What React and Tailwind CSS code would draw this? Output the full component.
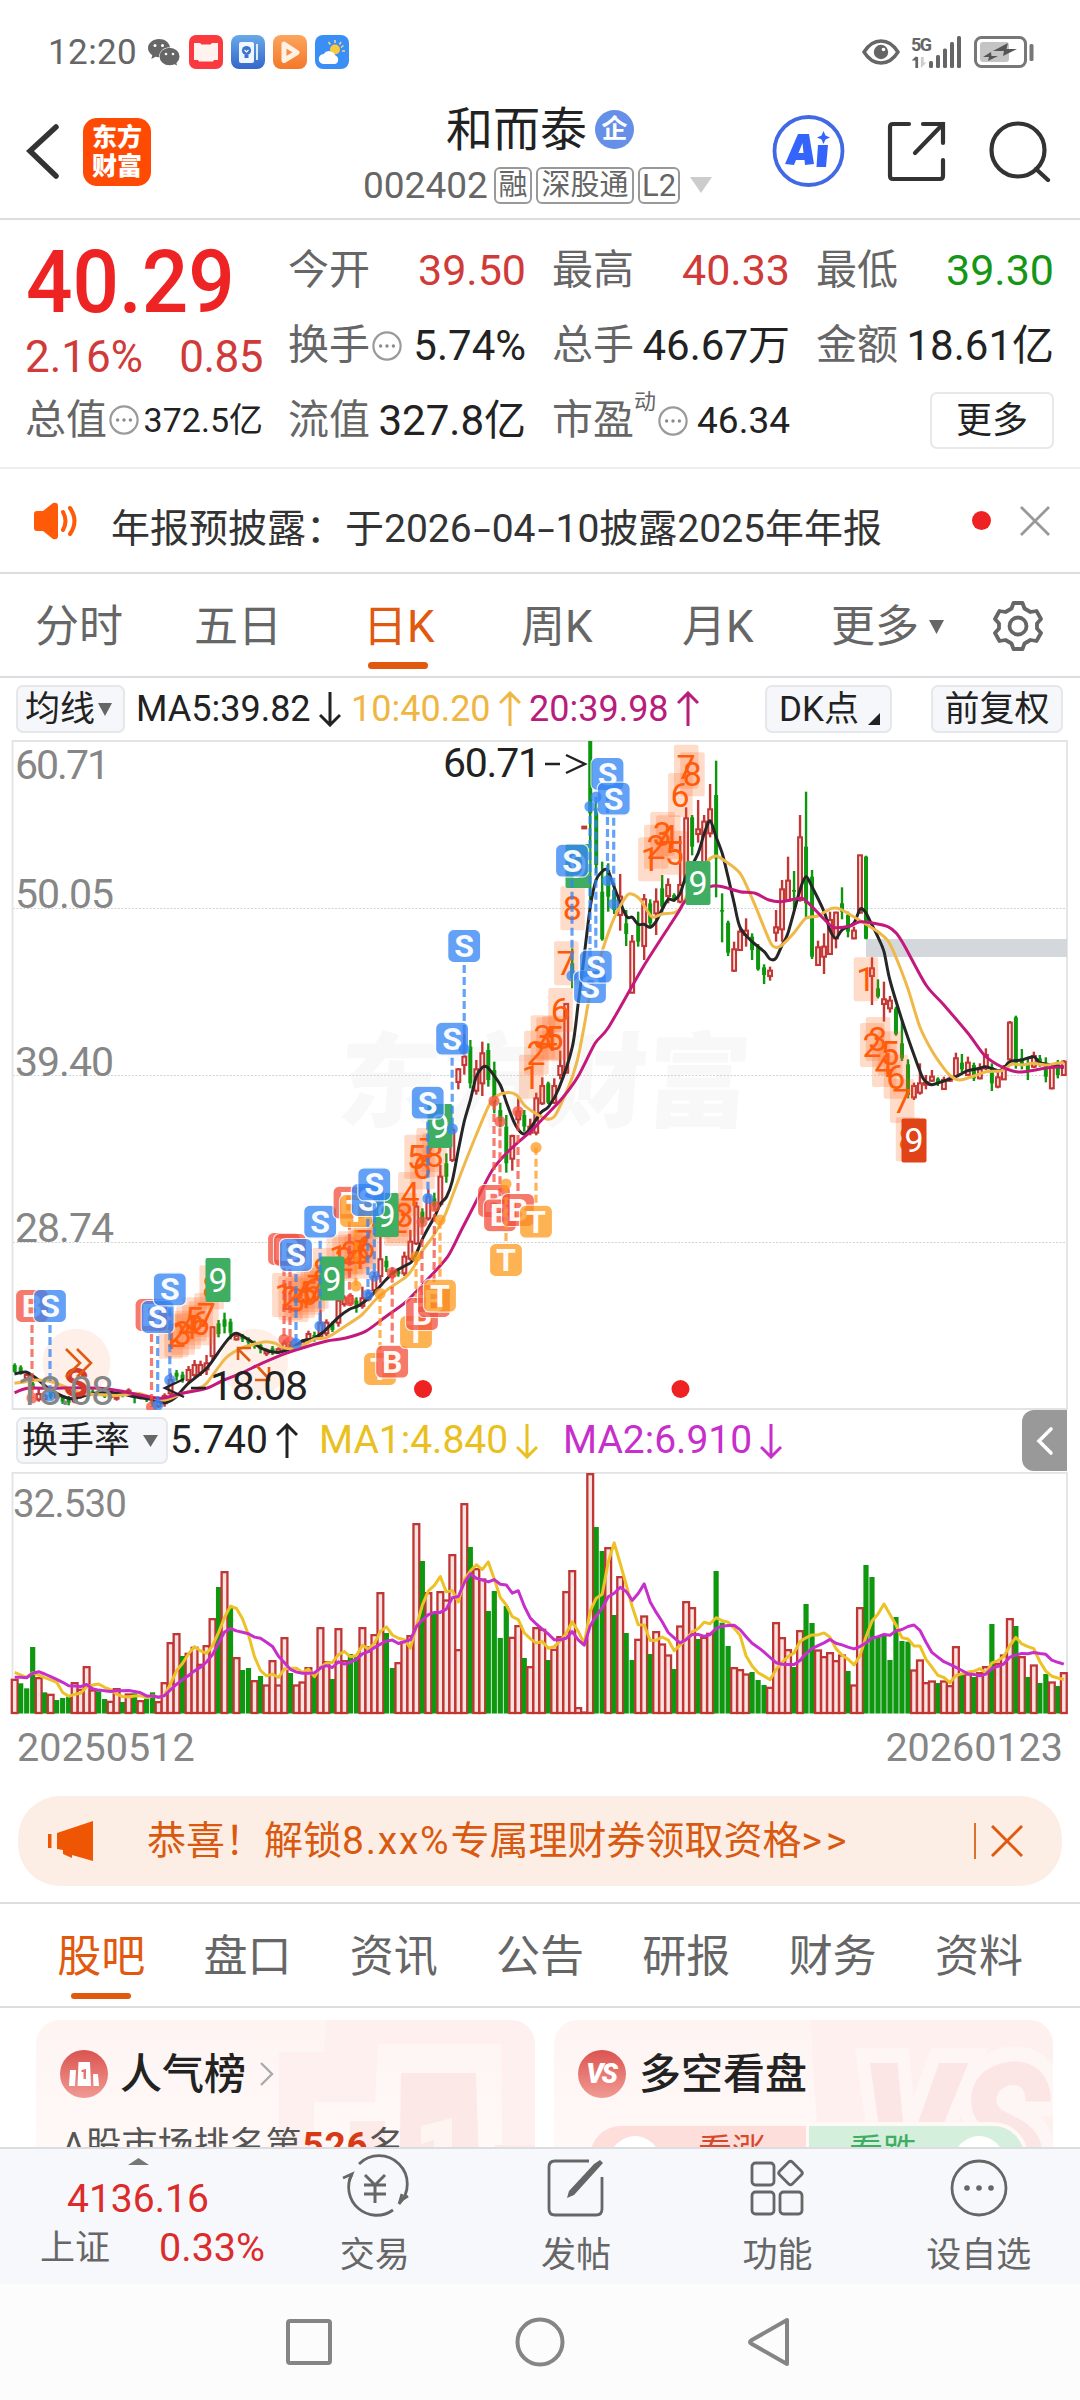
import React from "react";

const FONT = "font-['Roboto','Noto_Sans_CJK_SC',sans-serif]";

/* ---------- chart data ---------- */

const STEP = 5.995;
const X0 = 14.7;
const cx = (i) => X0 + STEP * i;

// Each volume entry: bar top (in thirds of a pixel below y=1400); trailing sign marks direction, negative = falling day.
const VOL = [
  838, -850, -865, -741, 833, -877, 883, -900, -894, -890, 848, 868, 800, 870, -874, -897, 904, 866, -906, 882, -880, 902,
  -896, -877, 905, 848, 728, 701, -768, 760, 742, 793, 737, 656, -561, 515, -622, 773, -810, -804, 842, -828, 855, 782,
  855, 713, -819, 855, 846, 803, -828, 683, 785, -837, 686, 782, -762, -766, 683, 740, 704, 578, -699, -804, 788, 725,
  707, 371, -483, 578, -642, 575, 600, 464, 749, 311, -441, 506, 537, -633, -573, -714, -618, 712, 677, -774, 800, 683,
  688, -780, 748, 710, 575, 512, 923, 936, 221, -381, -453, 443, -645, 530, -699, -780, 718, 648, -762, 695, 732, 765,
  -807, 678, 605, 623, -717, 712, 700, -513, -668, -738, 803, 809, 822, -816, -840, -855, 862, 668, 713, 749, -801, 692,
  -612, -669, 750, 770, 758, 782, 765, -813, 855, 623, -495, -531, -708, -705, -780, -651, -723, -725, 810, 780, 848,
  843, -849, 843, 857, 740, -820, 822, -831, 818, 800, -672, 790, 765, 656, -678, 770, -831, 795, -849, -822, 846, -858,
  818,
];

const MA5_HEAD = [817, 825, 832, 818];
const MA10_HEAD = [832, 832, 833, 820, 815, 822, 830, 838, 847];

function average(n, head) {
  return VOL.map((_, i) => {
    if (i < head.length) return head[i];
    let s = 0;
    for (let k = i - n + 1; k <= i; k++) s += Math.abs(VOL[k]);
    return s / n;
  });
}
const volLine = (arr) => arr.map((v, i) => `${cx(i).toFixed(1)},${(1400 + v / 3).toFixed(1)}`).join(" ");

const LX = (x) => x / 2.904;
const LY = (y) => 1060 + y / 3;
const RX = (x) => 540 + x / 2.904;
const RY = (y) => 730 + y / 3;
const L = (pts) => pts.map(([x, y]) => [LX(x), LY(y)]);
const R = (pts) => pts.map(([x, y]) => [RX(x), RY(y)]);

// index, direction, high, body top, body bottom, low
const CANDLES_LEFT = [
  [0, "g", 910, 915, 935, 938], [1, "g", 916, 922, 940, 944], [2, "r", 940, 945, 955, 960], [3, "g", 965, 970, 985, 990],
  [4, "r", 985, 1002, 1018, 1025], [5, "r", 1000, 1008, 1018, 1022], [6, "g", 990, 1000, 1012, 1018], [7, "r", 998, 1002, 1012, 1018],
  [8, "g", 1005, 1010, 1025, 1032], [9, "g", 1008, 1014, 1028, 1036], [10, "r", 1005, 1012, 1024, 1030], [11, "r", 995, 1000, 1010, 1016],
  [12, "r", 985, 990, 1002, 1006], [13, "g", 988, 994, 1000, 1004], [14, "g", 990, 998, 1005, 1008], [15, "g", 1000, 1004, 1010, 1014],
  [16, "r", 1000, 1006, 1010, 1016], [17, "r", 1004, 1010, 1016, 1022], [18, "g", 1000, 1004, 1008, 1012], [19, "r", 985, 992, 1000, 1006],
  [20, "g", 996, 1000, 1010, 1030], [21, "r", 1005, 1010, 1014, 1018], [22, "g", 1008, 1012, 1018, 1026], [23, "g", 1012, 1018, 1032, 1040],
  [24, "r", 1018, 1024, 1038, 1044], [25, "r", 1000, 1008, 1030, 1040], [26, "r", 940, 960, 1000, 1012], [27, "g", 930, 938, 950, 962],
  [28, "g", 935, 944, 958, 968], [29, "r", 918, 930, 960, 972], [30, "r", 900, 915, 945, 955], [31, "r", 902, 915, 938, 948],
  [32, "r", 885, 910, 928, 945], [33, "r", 798, 802, 888, 900], [34, "g", 780, 790, 822, 832], [35, "g", 758, 778, 800, 820],
  [36, "g", 776, 785, 818, 838], [37, "r", 822, 828, 838, 842], [38, "g", 822, 828, 838, 846], [39, "g", 832, 838, 848, 855],
  [40, "g", 842, 848, 858, 866], [41, "g", 850, 855, 868, 880], [42, "r", 866, 872, 880, 888], [43, "g", 858, 865, 875, 885],
  [44, "r", 862, 868, 876, 882], [45, "r", 840, 850, 866, 875], [46, "g", 845, 852, 862, 870], [47, "r", 848, 855, 862, 868],
  [48, "r", 838, 845, 855, 862], [49, "r", 812, 822, 838, 842], [50, "g", 815, 825, 838, 845], [51, "r", 748, 790, 830, 840],
  [52, "r", 778, 788, 820, 828], [53, "g", 785, 792, 810, 816], [54, "r", 712, 722, 788, 800], [55, "r", 706, 715, 732, 740],
  [56, "r", 700, 708, 730, 738], [57, "g", 712, 722, 742, 758], [58, "r", 680, 715, 738, 746], [59, "r", 690, 700, 718, 724],
  [60, "r", 636, 650, 690, 702], [61, "r", 530, 598, 648, 668], [62, "g", 588, 602, 622, 636], [63, "r", 622, 634, 648, 656],
  [64, "g", 625, 634, 642, 650], [65, "r", 575, 590, 640, 648], [66, "r", 510, 545, 596, 602], [67, "r", 425, 440, 550, 555],
  [68, "g", 445, 455, 490, 500], [69, "r", 388, 410, 475, 482], [70, "g", 398, 415, 440, 452], [71, "r", 315, 350, 432, 440],
  [72, "g", 280, 310, 350, 368], [73, "r", 200, 210, 300, 306], [74, "r", 24, 28, 66, 88], [75, "r", -80, -10, 15, 44],
  [76, "g", -60, -40, 70, 85], [77, "r", 0, 28, 92, 104], [78, "r", -55, -20, 70, 108], [79, "g", -50, -30, 60, 80],
  [80, "g", 5, 30, 130, 160], [81, "g", 128, 150, 185, 202], [82, "g", 165, 200, 310, 338], [83, "r", 224, 228, 296, 332],
  [84, "r", 115, 155, 178, 190], [85, "g", 150, 165, 200, 215], [86, "r", 176, 200, 218, 226], [87, "r", 98, 115, 218, 226],
];

const CANDLES_RIGHT = [
  [88, "r", 1042, 1068, 1120, 1125], [89, "g", 1055, 1060, 1118, 1122], [90, "r", 1045, 1068, 1118, 1122],
  [91, "r", 962, 1008, 1035, 1048], [92, "r", 820, 822, 1028, 1028], [93, "g", 655, 700, 745, 775],
  [95, "r", 289, 290, 295, 296], [96, "g", 33, 33, 250, 510], [97, "g", 215, 235, 405, 430], [98, "g", 395, 485, 628, 632],
  [99, "g", 400, 420, 500, 545], [100, "g", 460, 480, 540, 552], [101, "r", 432, 500, 555, 602], [102, "g", 540, 580, 612, 648],
  [103, "r", 615, 635, 788, 790], [104, "g", 545, 580, 635, 650], [105, "r", 492, 508, 648, 690], [106, "g", 508, 520, 580, 595],
  [107, "r", 475, 515, 550, 615], [108, "g", 435, 475, 530, 548], [109, "r", 445, 465, 498, 520], [110, "g", 490, 495, 510, 516],
  [111, "r", 318, 465, 515, 520], [112, "r", 232, 265, 450, 460], [113, "g", 255, 262, 350, 376], [114, "r", 210, 298, 312, 338],
  [115, "r", 255, 275, 400, 402], [116, "r", 162, 238, 310, 322], [117, "g", 92, 195, 385, 502], [118, "g", 490, 540, 545, 637],
  [119, "g", 572, 578, 668, 678], [120, "r", 635, 658, 722, 726], [121, "r", 590, 605, 660, 662], [122, "r", 565, 602, 615, 650],
  [123, "g", 610, 620, 660, 690], [124, "g", 642, 650, 718, 722], [125, "g", 703, 712, 735, 762], [126, "r", 710, 722, 738, 752],
  [127, "r", 540, 592, 608, 635], [128, "r", 450, 478, 598, 635], [129, "r", 380, 452, 512, 515], [130, "g", 423, 480, 485, 540],
  [131, "r", 255, 322, 510, 515], [132, "g", 185, 350, 520, 565], [133, "g", 420, 440, 680, 687], [134, "r", 632, 652, 705, 708],
  [135, "r", 610, 650, 680, 732], [136, "r", 545, 570, 672, 675], [137, "r", 545, 548, 625, 655], [138, "g", 472, 520, 545, 568],
  [139, "g", 545, 555, 605, 622], [140, "r", 590, 602, 625, 628], [141, "r", 375, 376, 548, 550], [142, "g", 377, 380, 626, 628],
  [143, "r", 682, 715, 738, 825], [144, "g", 748, 775, 800, 805], [145, "r", 755, 808, 822, 875], [146, "r", 798, 812, 835, 848],
  [147, "g", 830, 836, 912, 917], [148, "g", 870, 940, 985, 993], [149, "g", 988, 1003, 1095, 1105], [150, "r", 1058, 1068, 1102, 1110],
  [151, "r", 1000, 1060, 1088, 1094], [152, "r", 1035, 1058, 1064, 1078], [153, "r", 1020, 1040, 1052, 1056],
  [154, "g", 1042, 1046, 1058, 1068], [155, "r", 1040, 1050, 1077, 1080], [156, "r", 1035, 1046, 1052, 1056],
  [157, "r", 968, 985, 1038, 1042], [158, "g", 972, 998, 1018, 1026], [159, "r", 980, 998, 1035, 1038], [160, "g", 998, 1005, 1045, 1053],
  [161, "r", 1000, 1018, 1045, 1048], [162, "r", 955, 975, 1015, 1020], [163, "g", 1000, 1012, 1060, 1083],
  [164, "r", 1025, 1042, 1070, 1075], [165, "r", 1005, 1018, 1048, 1050], [166, "r", 873, 878, 988, 990], [167, "g", 857, 862, 1005, 1016],
  [168, "g", 957, 985, 1005, 1018], [169, "g", 985, 1000, 1022, 1050], [170, "r", 965, 978, 1010, 1014], [171, "g", 975, 985, 1005, 1010],
  [172, "g", 982, 1000, 1040, 1057], [173, "r", 1005, 1012, 1075, 1078], [174, "g", 990, 1000, 1035, 1045], [175, "r", 990, 995, 1035, 1038],
];

const MA5 = [
  ...L([[42, 942], [75, 936], [105, 955], [140, 985], [180, 1008], [210, 1016], [250, 1006], [300, 996], [345, 1000], [400, 1012], [440, 1018], [478, 1028], [510, 1012], [545, 972], [600, 925], [640, 868], [665, 835], [686, 820], [720, 838], [760, 865], [800, 877], [830, 872], [860, 855], [880, 842], [912, 835], [945, 810], [985, 770], [1015, 748], [1045, 735], [1085, 700], [1120, 660], [1150, 632], [1175, 618], [1200, 600], [1230, 530], [1262, 470], [1280, 430], [1297, 410], [1313, 365], [1331, 270], [1348, 185], [1366, 120], [1383, 50], [1401, 22], [1413, 20], [1430, 40], [1453, 75], [1470, 125], [1488, 175], [1505, 208], [1522, 222], [1540, 205]]),
  ...R([[2, 1148], [25, 1130], [55, 1075], [94, 950], [111, 820], [128, 680], [146, 530], [163, 450], [180, 425], [196, 420], [215, 470], [250, 557], [268, 562], [285, 583], [302, 583], [320, 592], [337, 575], [355, 538], [372, 508], [390, 510], [407, 490], [424, 440], [459, 370], [477, 310], [494, 272], [511, 320], [529, 370], [546, 440], [564, 520], [581, 592], [616, 635], [651, 665], [668, 687], [685, 685], [703, 645], [720, 610], [755, 480], [772, 440], [790, 470], [825, 545], [842, 600], [859, 625], [877, 600], [911, 580], [930, 537], [946, 548], [964, 585], [981, 620], [999, 665], [1016, 750], [1051, 870], [1086, 975], [1110, 1040], [1121, 1055], [1138, 1064], [1173, 1053], [1208, 1040], [1242, 1022], [1277, 1015], [1295, 1010], [1330, 1022], [1347, 1015], [1364, 995], [1399, 990], [1434, 980], [1451, 998], [1486, 1005], [1521, 1012]]),
];
const MA10 = [
  ...L([[42, 970], [75, 965], [110, 960], [150, 965], [200, 985], [240, 1000], [300, 1005], [350, 1006], [400, 1000], [440, 1012], [480, 1020], [530, 1000], [575, 985], [600, 970], [655, 895], [700, 865], [730, 855], [770, 845], [800, 850], [830, 865], [870, 860], [912, 838], [950, 832], [1000, 800], [1050, 765], [1090, 720], [1130, 685], [1180, 650], [1205, 615], [1225, 575], [1260, 525], [1290, 470], [1313, 410], [1348, 315], [1383, 225], [1418, 140], [1440, 110], [1470, 98], [1500, 105], [1522, 135], [1540, 150]]),
  ...R([[0, 1158], [25, 1168], [45, 1155], [75, 1090], [94, 1040], [111, 980], [128, 890], [146, 790], [180, 665], [215, 565], [250, 500], [266, 492], [290, 508], [325, 560], [355, 552], [390, 548], [410, 530], [455, 440], [490, 390], [511, 378], [530, 388], [581, 430], [620, 515], [668, 635], [685, 652], [703, 645], [738, 608], [772, 565], [807, 558], [842, 537], [859, 534], [877, 540], [911, 560], [946, 582], [981, 605], [1010, 632], [1033, 680], [1068, 775], [1103, 890], [1138, 962], [1173, 1015], [1195, 1040], [1220, 1050], [1260, 1038], [1295, 1025], [1340, 1022], [1370, 1003], [1400, 1005], [1430, 1000], [1470, 1005], [1500, 1000], [1521, 998]]),
];
const MA20 = [
  ...L([[42, 998], [80, 985], [150, 985], [230, 983], [290, 985], [350, 993], [420, 1008], [470, 1015], [520, 1002], [600, 985], [650, 960], [700, 940], [760, 910], [830, 880], [890, 860], [950, 843], [1000, 835], [1060, 815], [1120, 770], [1180, 725], [1240, 660], [1300, 590], [1340, 510], [1380, 430], [1430, 330], [1480, 270], [1540, 215]]),
  ...R([[0, 1175], [60, 1110], [110, 1040], [160, 940], [200, 890], [300, 710], [400, 550], [425, 510], [494, 470], [529, 470], [580, 485], [625, 490], [665, 510], [700, 515], [755, 505], [775, 515], [842, 585], [860, 593], [900, 588], [930, 575], [970, 580], [1010, 590], [1035, 610], [1060, 650], [1121, 765], [1173, 825], [1243, 910], [1290, 975], [1330, 1005], [1370, 1022], [1400, 1026], [1450, 1018], [1486, 1012], [1521, 1010]]),
];

// Smooth open curve through the given points.
function curve(p) {
  let d = `M${p[0][0].toFixed(1)} ${p[0][1].toFixed(1)}`;
  for (let i = 0; i < p.length - 1; i++) {
    const a = p[i - 1] || p[i];
    const b = p[i];
    const c = p[i + 1];
    const e = p[i + 2] || c;
    const k = 7;
    d += `C${(b[0] + (c[0] - a[0]) / k).toFixed(1)} ${(b[1] + (c[1] - a[1]) / k).toFixed(1)} ${(c[0] - (e[0] - b[0]) / k).toFixed(1)} ${(c[1] - (e[1] - b[1]) / k).toFixed(1)} ${c[0].toFixed(1)} ${c[1].toFixed(1)}`;
  }
  return d;
}

// Trade signals: letter, badge centre, price dot
const SIGNALS = [
  ["B", 32, 1306, 32, 1398], ["S", 50, 1306, 50, 1396],
  ["B", 151.5, 1315, 151.5, 1407], ["S", 157.7, 1317, 157.7, 1405], ["S", 169.8, 1289.3, 169.8, 1380],
  ["B", 284, 1249, 284, 1339.5], ["B", 290, 1250, 290, 1342], ["S", 296, 1255, 296, 1343.5], ["S", 320.2, 1221.7, 320, 1326],
  ["B", 349.5, 1202.7, 349.5, 1300.7], ["T", 356, 1211, 356, 1286], ["S", 367.8, 1200, 368, 1294.5], ["S", 374.3, 1184.3, 374.3, 1276],
  ["T", 380, 1369, 380, 1293.5], ["B", 392.2, 1361.7, 392.2, 1272.7],
  ["T", 416, 1332, 416, 1256.5], ["B", 422, 1314, 422, 1222], ["B", 434, 1301, 434.5, 1206.5], ["T", 440, 1295.7, 440, 1220],
  ["B", 494, 1201, 494, 1101], ["B", 500, 1215.3, 500, 1121.5], ["B", 518, 1210, 518, 1111.5],
  ["T", 506, 1260, 506, 1184], ["T", 536, 1221.7, 536, 1147.5],
  ["S", 427.7, 1102.7, 428, 1198.5], ["S", 452.1, 1038.7, 452.3, 1129], ["S", 464.2, 946, 464.2, 1049],
  ["S", 607.5, 774, 607.5, 880.7], ["S", 613.7, 798.7, 613.7, 904],
  ["S", 572, 860.7, 572, 975.7], ["S", 590, 987, 590, 806.5], ["S", 595.8, 966.7, 596, 797],
];
const SIGNAL_COLOR = { B: "#f4513f", S: "#3384f5", T: "#fd9a1e" };

const COUNTS = [
  ...L([[495, 830], [512, 826], [530, 818], [547, 802], [564, 778], [582, 790], [599, 765], [614, 682]]).map((p, i) => [...p, i + 1]),
  ...L([[825, 705], [843, 714], [860, 720], [878, 708], [895, 698], [908, 690], [918, 680], [935, 630]]).map((p, i) => [...p, i + 1]),
  ...L([[983, 590], [1000, 597], [1017, 580], [1035, 590], [1046, 575], [1062, 562], [1055, 545], [1100, 470]]).map((p, i) => [...p, i + 1]),
  ...L([[1150, 492], [1157, 482], [1174, 464], [1191, 402], [1209, 290], [1226, 322], [1244, 270], [1261, 285]]).map((p, i) => [...p, i + 1]),
  ...L([[1542, 50], [1557, -22], [1576, -68], [1592, -62], [1609, -66], [1627, -150], [1644, -290], [1662, -455]]).map((p, i) => [...p, i + 1]),
  ...R([[320, 388], [337, 350], [355, 312], [372, 322], [390, 368], [407, 195], [424, 110], [442, 133]]).map((p, i) => [...p, i + 1]),
  ...R([[946, 748], [964, 945], [981, 927], [999, 1005], [1016, 970], [1033, 1040], [1051, 1113], [1068, 1228]]).map((p, i) => [...p, i + 1]),
];
const NINES = [[218, 1280], [332, 1278.5], [386, 1215], [440, 1126], [578, 866], [698, 883]];

function Candle({ c, toY }) {
  const [i, dir, h, t, b, l] = c;
  const x = cx(i);
  const col = dir === "r" ? "#c23634" : "#0c970f";
  return (
    <g>
      <line x1={x} x2={x} y1={toY(h)} y2={toY(l)} stroke={col} strokeWidth="2.4" />
      {dir === "r" ? (
        <rect x={x - 1.9} y={toY(t)} width="3.8" height={Math.max(1, (b - t) / 3)} fill="#fbe3e2" stroke={col} strokeWidth="2.1" />
      ) : (
        <rect x={x - 2} y={toY(t)} width="4" height={Math.max(1, (b - t) / 3)} fill={col} />
      )}
    </g>
  );
}

function PriceChart() {
  return (
    <svg className="block h-[670px] w-[1080px] shrink-0" viewBox="0 740 1080 670" fontFamily="Roboto, 'Noto Sans CJK SC', sans-serif">
      <text x="335" y="1119" fontSize="103" fontWeight="900" fill="#f8f8f8" transform="skewX(-4) translate(79 0)" fontFamily="'Noto Sans CJK SC', sans-serif">东方财富</text>
      <g stroke="#c9c9c9" strokeWidth="1" strokeDasharray="2 1.5">
        <path d="M13 908.5H1067M13 1075.5H1067M13 1242.5H1067" opacity=".8" />
      </g>
      <path d="M12.5 741H1067V1409H12.5Z" fill="none" stroke="#e2e3e5" strokeWidth="1.8" />
      <rect x="866" y="939" width="201" height="18" fill="#d4d7dc" />
      <circle cx="76.5" cy="1362.7" r="34" fill="#fef0e8" />
      <circle cx="254" cy="1362.7" r="34" fill="#fef0e8" />
      {CANDLES_LEFT.map((c) => <Candle key={c[0]} c={c} toY={LY} />)}
      {CANDLES_RIGHT.map((c) => <Candle key={c[0]} c={c} toY={RY} />)}
      {COUNTS.map(([x, y, n], k) => (
        <g key={k}>
          <rect x={x - 12} y={y - 22} width="24.5" height="44" rx="2" fill="#ff6a20" opacity=".24" />
          <text x={x} y={y + 12} fontSize="34" textAnchor="middle" fill="#ff5a08">{n}</text>
        </g>
      ))}
      <g fill="none" strokeWidth="3" strokeLinejoin="round">
        <path d={curve(MA5)} stroke="#262626" />
        <path d={curve(MA10)} stroke="#f0b849" />
        <path d={curve(MA20)} stroke="#c3197d" />
      </g>
      {NINES.map(([x, y], k) => (
        <g key={k}>
          <rect x={x - 12.5} y={y - 22} width="25" height="44" rx="2" fill="#3fae62" />
          <text x={x} y={y + 12} fontSize="34" textAnchor="middle" fill="#fff">9</text>
        </g>
      ))}
      <rect x="901.5" y="1118.5" width="25" height="44" rx="2" fill="#e04318" />
      <text x="914" y="1152" fontSize="34" textAnchor="middle" fill="#fff">9</text>
      {SIGNALS.map(([s, x, y, dx, dy], k) => (
        <g key={k}>
          <line x1={x} x2={dx} y1={y + (dy > y ? 19 : -19)} y2={dy} stroke={SIGNAL_COLOR[s]} strokeWidth="3.2" strokeDasharray="8 4" opacity=".75" />
          <circle cx={dx} cy={dy} r="5.6" fill={SIGNAL_COLOR[s]} opacity=".75" />
          <rect x={x - 16.5} y={y - 16.5} width="33" height="33" rx="6" fill={SIGNAL_COLOR[s]} stroke="#fff" strokeWidth="1.2" opacity=".76" />
          <text x={x} y={y + 11} fontSize="32" fontWeight="700" textAnchor="middle" fill="#fff" opacity=".95">{s}</text>
        </g>
      ))}
      <text x="76" y="1397" fontSize="41" fontWeight="700" textAnchor="middle" fill="#d43a2c">S</text>
      <g fill="none" stroke="#e05a10" strokeWidth="2.6">
        <path d="M66 1349L80 1363L66 1377M77 1349L91 1363L77 1377" />
        <path d="M250 1361L238 1349M238 1360V1348H251M257 1366L269 1379M269 1367V1380H255" />
      </g>
      <g fontSize="41" fill="#868686">
        <text x="15" y="779" textLength="95">60.71</text>
        <text x="15" y="908" textLength="99">50.05</text>
        <text x="15" y="1076" textLength="99">39.40</text>
        <text x="15" y="1242" textLength="99">28.74</text>
        <text x="17" y="1405" textLength="97">18.08</text>
      </g>
      <g fontSize="41" fill="#222">
        <text x="443" y="777" textLength="98">60.71</text>
        <text x="210" y="1400" textLength="98">18.08</text>
        <path d="M545 764H560M566 755L585 764L566 773M191 1388H206M184 1379L165 1388L184 1397" fill="none" stroke="#222" strokeWidth="2.4" />
      </g>
      <circle cx="423" cy="1389" r="9" fill="#ee2222" />
      <circle cx="680.5" cy="1389" r="9" fill="#ee2222" />
    </svg>
  );
}

function VolumeChart() {
  return (
    <svg className="block h-[244px] w-[1080px] shrink-0" viewBox="0 1471 1080 244" fontFamily="Roboto, sans-serif">
      <path d="M12.5 1714V1472.8H1067V1714" fill="none" stroke="#e2e3e5" strokeWidth="1.8" />
      <text x="13" y="1517" fontSize="38.5" fill="#868686" textLength="114">32.530</text>
      {VOL.map((v, i) => {
        const y = 1400 + Math.abs(v) / 3;
        return v < 0 ? (
          <rect key={i} x={cx(i) - 2.6} y={y} width="5.2" height={1713.5 - y} fill="#0e970f" />
        ) : (
          <rect key={i} x={cx(i) - 2.9} y={y + 0.5} width="5.8" height={Math.max(0.5, 1712.5 - y)} fill="#fbe3e2" stroke="#bf3634" strokeWidth="2.3" />
        );
      })}
      <g fill="none" strokeWidth="3" strokeLinejoin="round">
        <polyline points={volLine(average(5, MA5_HEAD))} stroke="#edc226" />
        <polyline points={volLine(average(10, MA10_HEAD))} stroke="#c72fcb" />
      </g>
    </svg>
  );
}

/* ---------- small pieces ---------- */

function Dots() {
  return (
    <svg className="ml-[2px] h-[30px] w-[30px] shrink-0" viewBox="0 0 30 30" fill="none">
      <circle cx="15" cy="15" r="13.6" stroke="#9a9a9a" strokeWidth="2.2" />
      <g fill="#8a8a8a"><circle cx="8.600" cy="15" r="1.700" /><circle cx="15" cy="15" r="1.700" /><circle cx="21.400" cy="15" r="1.700" /></g>
    </svg>
  );
}

function Arrow({ up, color }) {
  return (
    <svg className="ml-[8px] h-[36px] w-[22px]" viewBox="0 0 22 36" fill="none" stroke={color} strokeWidth="3">
      {up ? <path d="M11 35V2M1 12L11 2L21 12" /> : <path d="M11 1V34M1 24L11 34L21 24" />}
    </svg>
  );
}

function Cell({ label, value, tone = "text-[#222]", children }) {
  return (
    <div className="flex w-[238px] items-center justify-between whitespace-nowrap text-[41px]">
      <span className="flex items-center text-[#666]">{label}{children}</span>
      <span className={tone}>{value}</span>
    </div>
  );
}

function StatusBar() {
  return (
    <div className="flex h-[104px] shrink-0 items-center pl-[48px] pr-[45px] text-[34px] leading-none text-[#666]">
      <span className="w-[100px] text-[35px] tracking-[0.4px]">12:20</span>
      <svg className="h-[30px] w-[32px]" viewBox="0 0 32 30" fill="#666">
        <path d="M11 2C5 2 0 6 0 11c0 3 1.600 5.500 4.300 7.200L3.300 22l4.300-2.200c1 .3 2.200.4 3.400.4C11 14 16 10 22 10.200 21.300 5.500 16.700 2 11 2Z" />
        <ellipse cx="21.500" cy="19.500" rx="10" ry="8.700" /><path d="M24 26l5 2.600-1-4z" />
        <g fill="#fff"><circle cx="7" cy="8.500" r="1.500" /><circle cx="14.500" cy="8.500" r="1.500" /><circle cx="18" cy="17" r="1.300" /><circle cx="25" cy="17" r="1.300" /></g>
      </svg>
      <div className="ml-[9px] flex gap-[8px]">
        <svg className="h-[34px] w-[34px]" viewBox="0 0 34 34"><rect width="34" height="34" rx="7" fill="#fa3a3e" /><path d="M5 8h6l1.500 1.500h9L23 8h6v17h-4l-1 1.500H10L9 25H5Z" fill="#fff3f0" /></svg>
        <svg className="h-[34px] w-[34px]" viewBox="0 0 34 34"><defs><linearGradient id="bl" x2="0" y2="1"><stop stopColor="#69a9e9" /><stop offset="1" stopColor="#3467c9" /></linearGradient></defs><rect width="34" height="34" rx="8" fill="url(#bl)" /><rect x="8" y="7" width="15" height="21" rx="2" fill="#eef6ff" /><path d="M26 9v16" stroke="#dcecff" strokeWidth="2" /><circle cx="15.500" cy="15.500" r="4.600" fill="#3b74cc" /><path d="M13.500 20h4v3h-4z" fill="#3b74cc" /><path d="M13.500 15l2 2 2-2" stroke="#fff" fill="none" strokeWidth="1.200" /></svg>
        <svg className="h-[34px] w-[34px]" viewBox="0 0 34 34"><defs><linearGradient id="og" x2="0" y2="1"><stop stopColor="#fca55c" /><stop offset="1" stopColor="#f4782a" /></linearGradient></defs><rect width="34" height="34" rx="8" fill="url(#og)" /><path d="M11 9L24 17.500L11 25.500Z" fill="none" stroke="#fff1e4" strokeWidth="5" strokeLinejoin="round" /></svg>
        <svg className="h-[34px] w-[34px]" viewBox="0 0 34 34"><rect width="34" height="34" rx="8" fill="#398ff5" /><g stroke="#f5d778" strokeWidth="1.600"><path d="M20 5v3M26 7l-1.500 2.500M30 16h-3M13.500 7l1.800 2.500M28.500 10.500l-2.500 2" /></g><circle cx="20" cy="14.500" r="5" fill="#fbc940" /><path d="M9 29a5 5 0 0 1-.4-10 6.500 6.500 0 0 1 11.500 1.300A4.600 4.600 0 0 1 20 29Z" fill="#fff" /></svg>
      </div>
      <div className="grow" />
      <svg className="h-[28px] w-[38px]" viewBox="0 0 38 28" fill="none"><path d="M2 14C7 6 12.500 3 19 3s12 3 17 11c-5 8-10.500 11-17 11S7 22 2 14Z" stroke="#666" strokeWidth="3.400" /><circle cx="19" cy="14" r="7.200" fill="#666" /><circle cx="21.500" cy="11.500" r="1.800" fill="#fff" /></svg>
      <div className="ml-[11px] flex w-[18px] flex-col text-[18px] font-bold leading-[18px]">
        <span className="leading-[17px] tracking-[-1.500px]">5G</span>
        <svg className="mt-[3px] h-[12px] w-[17px]" viewBox="0 0 17 13"><path d="M4 1h3v12H4zM0 5L5 0v5z" fill="#666" /><path d="M10 1v12l6-6h-3V1z" fill="#ccc" /></svg>
      </div>
      <svg className="h-[32px] w-[34px]" viewBox="0 0 34 32" fill="#666"><rect x="0" y="25" width="4" height="7" rx="1.500" /><rect x="7" y="19" width="4" height="13" rx="1.500" /><rect x="14" y="12.500" width="4" height="19.500" rx="1.500" /><rect x="21" y="6" width="4" height="26" rx="1.500" /><rect x="28" y="0" width="4" height="32" rx="1.500" /></svg>
      <svg className="ml-[11px] h-[33px] w-[61px]" viewBox="0 0 61 33"><rect x="1.500" y="1.500" width="50" height="29" rx="6" fill="none" stroke="#777" strokeWidth="3" /><rect x="6" y="6" width="29" height="20" rx="3" fill="#c4c4c4" /><path d="M34 7L19 15h11l-1 5 14-7H32.500ZM17 16l-8 5h6l-1 4 10-5h-6.500Z" fill="#555" /><rect x="55.500" y="8" width="4" height="17" rx="1.500" fill="#777" /></svg>
    </div>
  );
}

function Header() {
  return (
    <div className="flex h-[116px] shrink-0 items-start border-b-2 border-[#dcdde0] pl-[26px]">
      <svg className="mt-[19px] h-[56px] w-[34px]" viewBox="0 0 34 56" fill="none" stroke="#333" strokeWidth="5.500" strokeLinecap="round" strokeLinejoin="miter"><path d="M30 4L4 28L30 53" /></svg>
      <div className="ml-[23px] mt-[14px] flex h-[68px] w-[68px] flex-col items-center justify-center rounded-[14px] bg-[#ff4a04] text-[25px] font-black leading-[29px] text-white">
        <span>东方</span><span>财富</span>
      </div>
      <div className="ml-[211px] flex w-[352px] flex-col">
        <div className="flex h-[50px] items-center pl-[84px]">
          <span className="text-[47px] leading-none text-[#222]">和而泰</span>
          <span className="ml-[8px] flex h-[39px] w-[39px] items-center justify-center rounded-full bg-[#6690e8] text-[26px] font-bold leading-none text-white">企</span>
        </div>
        <div className="mt-[12px] flex h-[38px] items-center text-[37px] leading-none text-[#666]">
          <span className="w-[132px] pl-[1px]">002402</span>
          <span className="flex h-[37px] w-[38px] items-center justify-center rounded-[6px] border-2 border-[#999] text-[29px]">融</span>
          <span className="ml-[4px] flex h-[37px] w-[98px] shrink-0 items-center justify-center rounded-[6px] border-2 border-[#999] text-[29px]">深股通</span>
          <span className="ml-[4px] flex h-[37px] w-[42px] shrink-0 items-center justify-center rounded-[6px] border-2 border-[#999] text-[31px]">L2</span>
          <svg className="ml-[10px] h-[16px] w-[22px] shrink-0" viewBox="0 0 22 16"><path d="M0 0H22L11 16Z" fill="#ccc" /></svg>
        </div>
      </div>
      <svg className="ml-[58px] mt-[10px] h-[73px] w-[73px]" viewBox="0 0 73 73"><circle cx="36.500" cy="37" r="34" fill="none" stroke="#4169e4" strokeWidth="3.800" /><g fill="#3564fb"><path fillRule="evenodd" d="M26 20L37 20L42 50L33 51L32.500 46H24L22 51L13 50ZM26.500 39H31.500L30.500 29Z" /><path d="M46 31L56 31L54 53L44.500 53ZM51.500 17L53.500 21.500L58 23.500L53.500 25.500L51.500 30L49.500 25.500L45 23.500L49.500 21.500Z" /></g></svg>
      <svg className="ml-[42px] mt-[16px] h-[62px] w-[60px]" viewBox="0 0 60 62" fill="none" stroke="#333" strokeWidth="4.200" strokeLinecap="round"><path d="M22 4H6Q3 4 3 7V56Q3 59 6 59H53Q56 59 56 56V40M36 4H56V23M56 4L28 33" /></svg>
      <svg className="ml-[42px] mt-[16px] h-[62px] w-[62px]" viewBox="0 0 62 62" fill="none" stroke="#333" strokeWidth="4.200" strokeLinecap="round"><circle cx="29" cy="30" r="26.500" /><path d="M47 49L59 60" /></svg>
    </div>
  );
}

function Quote() {
  return (
    <div className="flex h-[249px] shrink-0 border-b-2 border-[#eee] pl-[25px] leading-none">
      <div className="w-[238px] pt-[27px]">
        <div className="ml-px h-[70px] origin-left scale-x-[0.93] text-[88px] font-medium leading-[70px] text-[#ee2323]">40.29</div>
        <div className="mt-[16px] flex h-[48px] items-center justify-between text-[44px] text-[#d03a38]"><span>2.16%</span><span className="tracking-[-0.500px]">0.85</span></div>
        <div className="mt-[15px] flex h-[48px] items-center text-[41px] text-[#666]">总值<Dots /><span className="ml-auto text-[34px] text-[#222]">372.5亿</span></div>
      </div>
      <div className="ml-[25px] grid grid-cols-[238px_238px_238px] grid-rows-[75px_75px_75px] gap-x-[26px] pt-[13px]">
        <Cell label="今开" value="39.50" tone="text-[#d03a38] text-[43px]" />
        <Cell label="最高" value="40.33" tone="text-[#d03a38] text-[43px]" />
        <Cell label="最低" value="39.30" tone="text-[#159615] text-[43px]" />
        <Cell label="换手" value="5.74%" tone="text-[#222] text-[42px]"><Dots /></Cell>
        <Cell label="总手" value="46.67万" tone="text-[#222] text-[42px]" />
        <Cell label="金额" value="18.61亿" tone="text-[#222] text-[42px]" />
        <Cell label="流值" value="327.8亿" tone="text-[#222] text-[42px]" />
        <Cell label="市盈" value="46.34" tone="text-[#222] text-[37px]"><span className="-mt-[38px] text-[22px]">动</span><Dots /></Cell>
        <div className="flex items-center justify-end"><span className="flex h-[57px] w-[124px] items-center justify-center rounded-[7px] border-2 border-[#e8e8e8] text-[36px] text-[#222]">更多</span></div>
      </div>
    </div>
  );
}

function Hyphen() {
  return <span className="inline-block w-[20px] scale-x-[1.600] text-center">-</span>;
}

function Notice() {
  return (
    <div className="flex h-[105px] shrink-0 items-center border-b-2 border-[#dcdde0] pl-[33px] leading-none">
      <svg className="h-[38px] w-[46px]" viewBox="0 0 46 38"><path d="M4 9H10L20 1Q25 0 25 4V34Q25 38 20 37L10 29H4Q1 29 1 26V12Q1 9 4 9Z" fill="#ff5a08" /><path d="M30 10Q35 19 30 28M37 6Q46 19 37 32" fill="none" stroke="#ff5a08" strokeWidth="4" strokeLinecap="round" /></svg>
      <span className="ml-[32px] mt-[18px] w-[861px] whitespace-nowrap text-[39px] text-[#333]">年报预披露：于2026<Hyphen />04<Hyphen />10披露2025年年报</span>
      <span className="h-[19px] w-[19px] rounded-full bg-[#ee2222]" />
      <svg className="ml-[29px] h-[30px] w-[30px]" viewBox="0 0 30 30" stroke="#999" strokeWidth="2.800"><path d="M1 1L29 29M29 1L1 29" /></svg>
    </div>
  );
}

function PeriodTabs() {
  return (
    <div className="flex h-[104px] shrink-0 items-center border-b-2 border-[#dcdde0] pt-[3px] text-[44px] leading-none text-[#666]">
      <span className="w-[159px] pl-[35px]">分时</span>
      <span className="w-[160px] pl-[35px]">五日</span>
      <span className="relative w-[159px] pl-[44px] text-[#e0590f]">日K<i className="absolute -bottom-[20px] left-[49px] h-[7px] w-[60px] rounded-full bg-[#e0590f]" /></span>
      <span className="w-[160px] pl-[43px]">周K</span>
      <span className="w-[160px] pl-[44px]">月K</span>
      <span className="pl-[33px]">更多</span>
      <svg className="ml-[10px] h-[14px] w-[15px]" viewBox="0 0 15 14"><path d="M0 0H15L7.500 14Z" fill="#666" /></svg>
      <svg className="mb-[2px] ml-[48px] h-[52px] w-[52px]" viewBox="0 0 52 52" fill="none" stroke="#666" strokeWidth="3.800" strokeLinejoin="round"><circle cx="26" cy="26" r="8.500" /><path d="M21.500 3H30.500L32.500 8.500L38.500 12L44.500 11L49 19L45 23.500V28.500L49 33L44.500 41L38.500 40L32.500 43.500L30.500 49H21.500L19.500 43.500L13.500 40L7.500 41L3 33L7 28.500V23.500L3 19L7.500 11L13.500 12L19.500 8.500Z" /></svg>
    </div>
  );
}

const chip = "flex shrink-0 items-center rounded-[7px] border-2 border-[#e6e7eb] bg-[#f6f7fa] text-[#222]";

function AverageRow() {
  return (
    <div className="flex h-[62px] shrink-0 items-center pl-[16px] text-[36px] leading-none">
      <div className={`${chip} h-[48px] w-[109px] pl-[7px] text-[35px]`}>均线<svg className="ml-[3px] h-[13px] w-[14px]" viewBox="0 0 14 13"><path d="M0 0H14L7 13Z" fill="#666" /></svg></div>
      <div className="ml-[11px] flex w-[215px] items-center text-[#222]">MA5:39.82<Arrow color="#222" /></div>
      <div className="flex w-[178px] items-center text-[#efb643]">10:40.20<Arrow up color="#efb643" /></div>
      <div className="flex w-[236px] items-center text-[#b81d7b]">20:39.98<Arrow up color="#b81d7b" /></div>
      <div className={`${chip} h-[48px] w-[127px] pl-[12px] text-[35px]`}>DK点<svg className="ml-[9px] mt-[20px] h-[12px] w-[12px]" viewBox="0 0 12 12"><path d="M12 0V12H0Z" fill="#222" /></svg></div>
      <div className={`${chip} ml-[39px] h-[48px] w-[132px] justify-center text-[35px]`}>前复权</div>
    </div>
  );
}

function TurnoverRow() {
  return (
    <div className="flex h-[61px] shrink-0 items-center pl-[16px] text-[39px] leading-none">
      <div className={`${chip} h-[47px] w-[152px] pl-[4px] text-[36px]`}>换手率<svg className="ml-[13px] h-[12px] w-[15px]" viewBox="0 0 15 12"><path d="M0 0H15L7.500 12Z" fill="#666" /></svg></div>
      <div className="ml-[2px] flex w-[149px] items-center text-[#222]">5.740<Arrow up color="#222" /></div>
      <div className="flex w-[244px] items-center text-[#e9c020]">MA1:4.840<Arrow color="#e9c020" /></div>
      <div className="flex items-center text-[#c72fcb]">MA2:6.910<Arrow color="#c72fcb" /></div>
      <div className="ml-auto mr-[13px] flex h-[61px] w-[45px] items-center justify-center rounded-l-[12px] bg-[#999]">
        <svg className="h-[30px] w-[18px]" viewBox="0 0 18 30" fill="none" stroke="#fff" strokeWidth="3.600" strokeLinecap="round"><path d="M15 3L3 15L15 27" /></svg>
      </div>
    </div>
  );
}

function Banner() {
  return (
    <div className="mx-[18px] mt-[16px] flex h-[90px] shrink-0 items-center rounded-[42px] bg-[#fceee5] pl-[29px] leading-none">
      <svg className="h-[40px] w-[47px]" viewBox="0 0 47 40" fill="#ee5604"><path d="M1 13h3.500v14H1zM10 12L46 0V40L25 34V37L16 33V29L10 28Z" /></svg>
      <span className="ml-[53px] w-[827px] whitespace-nowrap text-[39px] text-[#d8590f]">恭喜！解锁<span className="tracking-[1.800px]">8.xx%</span>专属理财券领取资格<span className="tracking-[4px]">&gt;&gt;</span></span>
      <span className="h-[36px] w-[2px] bg-[#d9732f]" />
      <svg className="ml-[15px] h-[32px] w-[32px]" viewBox="0 0 32 32" stroke="#e0590f" strokeWidth="3"><path d="M1 1L31 31M31 1L1 31" /></svg>
    </div>
  );
}

function SectionTabs() {
  return (
    <div className="mt-[16px] flex h-[106px] shrink-0 items-center border-y-2 border-[#dcdde0] pl-[28px] pt-[4px] text-[44px] leading-none text-[#666]">
      <span className="relative w-[146.300px] text-center text-[#e0590f]">股吧<i className="absolute -bottom-[20px] left-[43px] h-[6px] w-[60px] rounded-full bg-[#e0590f]" /></span>
      {["盘口", "资讯", "公告", "研报", "财务", "资料"].map((t) => <span key={t} className="w-[146.300px] text-center">{t}</span>)}
    </div>
  );
}

function Cards() {
  return (
    <div className="flex h-[139px] shrink-0 gap-[19px] overflow-hidden pl-[36px] pt-[12px]">
      <div className="relative h-[180px] w-[499px] shrink-0 overflow-hidden rounded-[24px] bg-gradient-to-b from-[#fef5f3] to-[#fffaf8]">
        <svg className="absolute left-0 top-0 h-[180px] w-[499px]" viewBox="0 0 499 180"><path d="M290 0H499V180H467L465 24H342L339 82H278V180H243V32H288Z" fill="#fef0ee" /><path d="M365 53H440L444 180H363Z" fill="#fce8e6" /><path d="M314 101H349V180H312Z" fill="#fdebe9" /><path d="M459 125H499V180H459Z" fill="#fdebe9" /><path d="M385 106L416 98V180H398V120L385 124Z" fill="#fef4f2" /></svg>
        <div className="relative flex h-[110px] items-center pl-[24px] leading-none">
          <svg className="mb-[2px] h-[48px] w-[48px]" viewBox="0 0 48 48"><defs><linearGradient id="rd" x2="0" y2="1"><stop stopColor="#db5350" /><stop offset="1" stopColor="#f09a94" /></linearGradient></defs><circle cx="24" cy="24" r="24" fill="url(#rd)" /><g fill="#fff"><path d="M10 20H16L15 36H9Z" /><path fillRule="evenodd" d="M18.500 12H30L31 36H17.500ZM21.500 20V22H23.500V29H26V19Z" /><path d="M33 24H38L39 36H33.500Z" /></g></svg>
          <span className="ml-[12px] text-[42px] font-medium text-[#222]">人气榜</span>
          <svg className="mb-[2px] ml-[13px] h-[24px] w-[15px]" viewBox="0 0 15 24" fill="none" stroke="#aaa" strokeWidth="2.400"><path d="M2 1L13 12L2 23" /></svg>
        </div>
        <div className="relative -mt-[8px] whitespace-nowrap pl-[26px] text-[36px] leading-[48px] text-[#555]">A股市场排名第<b className="ml-[1px] text-[37px] tracking-[0.800px] text-[#d93a16]">526</b>名</div>
      </div>
      <div className="relative h-[180px] w-[499px] shrink-0 overflow-hidden rounded-[24px] bg-gradient-to-b from-[#fef5f3] to-[#fffaf8]">
        <svg className="absolute left-0 top-0 h-[180px] w-[499px]" viewBox="0 0 499 180"><path d="M256 0H499V180H268Z" fill="#fef0ee" /><text x="306" y="172" fontSize="182" fontWeight="900" fontStyle="italic" fontFamily="Roboto" fill="#fce6e5" stroke="#fef6f4" strokeWidth="30" paintOrder="stroke" textLength="190" lengthAdjust="spacingAndGlyphs">VS</text></svg>
        <div className="relative flex h-[110px] items-center pl-[24px] leading-none">
          <span className="mb-[2px] flex h-[48px] w-[48px] items-center justify-center rounded-full bg-gradient-to-b from-[#db5350] to-[#f09a94] pr-[2px] text-[27px] font-black italic tracking-[-2px] text-white">VS</span>
          <span className="ml-[13px] text-[42px] font-medium text-[#222]">多空看盘</span>
        </div>
        <div className="relative -mt-[8px] ml-[32px] flex h-[70px] w-[442px] rounded-full border-4 border-[#fff8f6] text-[34px] leading-none">
          <div className="flex w-[216px] items-start justify-end rounded-l-full bg-[#fddedb] pr-[40px] pt-[8px] text-[#d8482a]">看涨</div>
          <div className="ml-[3px] flex grow items-start rounded-r-full bg-[#d5efdd] pl-[40px] pt-[8px] text-[#3fae62]">看跌</div>
          <i className="absolute left-[20px] top-[10px] h-[50px] w-[50px] rounded-full bg-white" />
          <i className="absolute right-[20px] top-[10px] h-[50px] w-[50px] rounded-full bg-white" />
        </div>
      </div>
    </div>
  );
}

function Tool({ label, children }) {
  return (
    <div className="flex w-[201.400px] flex-col items-center">
      <svg className="mt-[9px] h-[60px] w-[66px] overflow-visible" viewBox="0 0 66 60" fill="none" stroke="#666" strokeWidth="2.800">{children}</svg>
      <span className="mt-[19px] text-[35px] leading-[38px]">{label}</span>
    </div>
  );
}

function BottomBar() {
  return (
    <div className="relative flex h-[137px] shrink-0 border-t-2 border-[#dcdde0] bg-[#f7f8fb] text-[#666]">
      <div className="w-[274px] leading-none">
        <svg className="ml-[128px] mt-[9px] h-[7px] w-[21px]" viewBox="0 0 21 7"><path d="M10.500 0L21 7H0Z" fill="#777" /></svg>
        <div className="mt-[12px] pl-[67px] text-[39px] leading-[44px] text-[#dc2b2b]">4136.16</div>
        <div className="mt-[5px] flex h-[44px] items-center pl-[40px] text-[35px]">上证<span className="ml-[49px] text-[39.500px] text-[#dc2b2b]">0.33%</span></div>
      </div>
      <Tool label="交易">
        <path d="M17 6A28 28 0 0 1 57 46M51 52A28 28 0 0 1 10 16" /><path d="M1 20L10 16L7 23M66 38L58 43L60 36" />
        <path d="M23 17L33 27L43 17M33 27V45M22 27H44M22 36H44" strokeWidth="3" />
      </Tool>
      <Tool label="发帖">
        <path d="M46 3H12Q6 3 6 9V51Q6 57 12 57H53Q59 57 59 51V19" /><path d="M57 2L60 5L31 37L24 40L26 33L51 6Z" fill="#666" stroke="none" />
      </Tool>
      <Tool label="功能">
        <rect x="8" y="5" width="22" height="22" rx="3.500" /><rect x="8" y="34" width="22" height="22" rx="3.500" /><rect x="36" y="34" width="22" height="22" rx="3.500" /><rect x="37.500" y="6" width="18" height="18" rx="2.500" transform="rotate(45 46.500 15)" />
      </Tool>
      <Tool label="设自选">
        <circle cx="33" cy="30" r="27" /><g fill="#666" stroke="none"><circle cx="21" cy="30" r="2.800" /><circle cx="33" cy="30" r="2.800" /><circle cx="45" cy="30" r="2.800" /></g>
      </Tool>
    </div>
  );
}

function SystemNav() {
  return (
    <div className="flex h-[116px] shrink-0 items-center bg-[#fcfcfc] pl-[286px]">
      <svg className="h-[50px] w-[46px]" viewBox="0 0 46 50"><rect x="2" y="4" width="42" height="42" rx="2" fill="none" stroke="#858585" strokeWidth="4" /></svg>
      <svg className="ml-[183px] h-[50px] w-[50px]" viewBox="0 0 50 50"><circle cx="25" cy="25" r="22.500" fill="none" stroke="#858585" strokeWidth="4" /></svg>
      <svg className="ml-[181px] h-[52px] w-[45px]" viewBox="0 0 45 52"><path d="M41 4V48L5 27.500Q3 26 5 24.500Z" fill="none" stroke="#858585" strokeWidth="4" strokeLinejoin="round" /></svg>
    </div>
  );
}

export default function App() {
  return (
    <div className={`flex h-[2400px] w-[1080px] flex-col overflow-hidden bg-white ${FONT}`}>
      <StatusBar />
      <Header />
      <Quote />
      <Notice />
      <PeriodTabs />
      <AverageRow />
      <PriceChart />
      <TurnoverRow />
      <VolumeChart />
      <div className="flex h-[65px] shrink-0 items-center justify-between pl-[17px] pr-[17px] text-[39.500px] leading-none text-[#868686]">
        <span>20250512</span><span>20260123</span>
      </div>
      <Banner />
      <SectionTabs />
      <Cards />
      <BottomBar />
      <SystemNav />
    </div>
  );
}
